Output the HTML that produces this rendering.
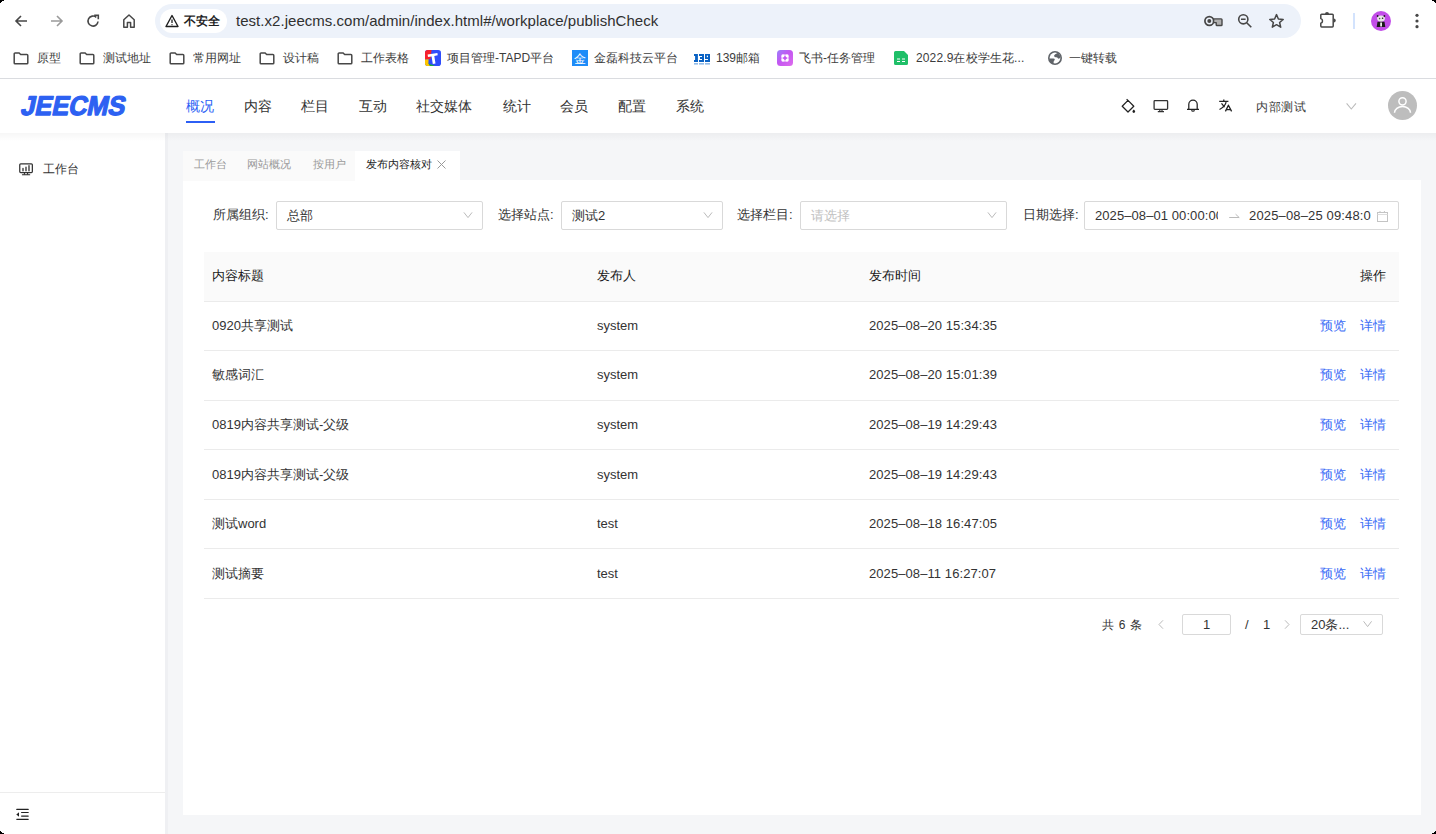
<!DOCTYPE html>
<html><head><meta charset="utf-8">
<style>
*{box-sizing:border-box;margin:0;padding:0}
html,body{width:1436px;height:834px;overflow:hidden;background:#fff;font-family:"Liberation Sans",sans-serif;color:#333}
.a{position:absolute;white-space:nowrap}
svg{position:absolute;overflow:visible}
#chrome{position:absolute;left:0;top:0;width:1436px;height:79px;background:#fff;border-bottom:1px solid #dadce0}
#url{position:absolute;left:155px;top:4px;width:1146px;height:34px;border-radius:17px;background:#edf2fa}
#pill{position:absolute;left:160px;top:9px;width:67px;height:24px;border-radius:12px;background:#fff}
.bm{position:absolute;top:50.5px;font-size:12px;color:#3c3c3c;white-space:nowrap;line-height:15px}
#header{position:absolute;left:0;top:79px;width:1436px;height:54px;background:#fff;z-index:2}
#hshadow{position:absolute;left:0;top:133px;width:1436px;height:8px;background:linear-gradient(rgba(0,0,0,.035),rgba(0,0,0,0));z-index:3}
#side{position:absolute;left:0;top:133px;width:165px;height:701px;background:#fff}
#content{position:absolute;left:165px;top:133px;width:1271px;height:701px;background:#f5f6f8;background-image:linear-gradient(90deg,#eff0f3 0,#eff0f3 3px,#f5f6f8 3px)}
#tabs{position:absolute;left:183px;top:151px;width:277px;height:30px;background:linear-gradient(90deg,#fafafa 0,#fafafa 172px,#fff 172px);z-index:1}
#card{position:absolute;left:183px;top:180px;width:1238px;height:635px;background:#fff}
.nav{position:absolute;top:19px;font-size:14px;line-height:17px;color:#333;white-space:nowrap}
.tab{position:absolute;top:6px;font-size:11px;line-height:14px;color:#999;white-space:nowrap}
.lbl{position:absolute;top:207px;font-size:13px;line-height:16px;color:#333}
.sel{position:absolute;top:201px;height:29px;border:1px solid #d9d9d9;border-radius:2px;background:#fff}
.th{position:absolute;top:88px;white-space:nowrap;font-size:13px;line-height:16px;color:#1a1a1a;font-weight:500}
.row{position:absolute;left:0;width:1238px;height:16px;font-size:13px;line-height:16px;color:#333}
.row span{position:absolute;top:0;white-space:nowrap}
.c1{left:29px}.c2{left:414px}.c3{left:686px;letter-spacing:0.08px}
.o1{left:1137px;color:#3b6cf6}.o2{left:1177px;color:#3b6cf6}
.rl{position:absolute;left:21px;width:1195px;height:1px;background:#ebebeb}
</style></head><body>
<div id="chrome">
  <div id="url"></div>
  <div id="pill"></div>
  <!-- nav icons -->
  <svg style="left:13px;top:13px" width="16" height="16" viewBox="0 0 16 16"><path d="M14 8H3M8 3L3 8l5 5" fill="none" stroke="#474747" stroke-width="1.6"/></svg>
  <svg style="left:49px;top:13px" width="16" height="16" viewBox="0 0 16 16"><path d="M2 8h11M8 3l5 5-5 5" fill="none" stroke="#9a9a9a" stroke-width="1.6"/></svg>
  <svg style="left:85px;top:13px" width="16" height="16" viewBox="0 0 16 16"><path d="M13 8.5A5 5 0 1 1 11.3 4.3" fill="none" stroke="#474747" stroke-width="1.6"/><path d="M9.2 2.2h4.1v4.1" fill="none" stroke="#474747" stroke-width="1.6"/></svg>
  <svg style="left:121px;top:13px" width="16" height="16" viewBox="0 0 16 16"><path d="M2.8 14.2V6.8L8 2l5.2 4.8v7.4H9.6V9.6H6.4v4.6z" fill="none" stroke="#474747" stroke-width="1.5" stroke-linejoin="round"/></svg>
  <!-- warning -->
  <svg style="left:165px;top:14px" width="14" height="14" viewBox="0 0 14 14"><path d="M7 1.5L13 12.5H1z" fill="none" stroke="#1f1f1f" stroke-width="1.4" stroke-linejoin="round"/><path d="M7 5.5v3.5M7 10.2v1" stroke="#1f1f1f" stroke-width="1.3"/></svg>
  <div class="a" style="left:184px;top:14px;font-size:12px;line-height:15px;color:#1f1f1f;font-weight:bold">不安全</div>
  <div class="a" style="left:236px;top:12px;font-size:15px;line-height:18px;color:#303030;letter-spacing:0.035px">test.x2.jeecms.com/admin/index.html#/workplace/publishCheck</div>
  <!-- right icons -->
  <svg style="left:1203px;top:15px" width="20" height="12" viewBox="0 0 20 12"><circle cx="6.3" cy="6" r="4.4" fill="none" stroke="#474747" stroke-width="1.7"/><circle cx="6.3" cy="6" r="2" fill="#474747"/><path d="M10.6 3.9h7.6q.8 0 .8.8v5q0 .8-.8.8h-4.2q-.8 0-.8-.8V7.6h-2.6z" fill="#b0b0b0" stroke="#474747" stroke-width="1.4" stroke-linejoin="round"/></svg>
  <svg style="left:1237px;top:13px" width="16" height="16" viewBox="0 0 16 16"><circle cx="6.3" cy="6.3" r="4.6" fill="none" stroke="#474747" stroke-width="1.6"/><path d="M4 6.3h4.6M9.7 9.7L14.3 14.3" stroke="#474747" stroke-width="1.6"/></svg>
  <svg style="left:1268px;top:13px" width="17" height="16" viewBox="0 0 17 16"><path d="M8.5 1.6l1.9 4.4 4.8.4-3.6 3.1 1.1 4.7-4.2-2.5-4.2 2.5 1.1-4.7L1.8 6.4l4.8-.4z" fill="none" stroke="#474747" stroke-width="1.5" stroke-linejoin="round"/></svg>
  <svg style="left:1319px;top:11px" width="18" height="18" viewBox="0 0 18 18"><path d="M1.8 4.1q0-.9.9-.9h10.6q.9 0 .9.9v11q0 .9-.9.9H2.7q-.9 0-.9-.9v-2.9a2.4 2.4 0 0 0 0-4.6z" fill="none" stroke="#474747" stroke-width="1.5" stroke-linejoin="round"/><path d="M6 3a2 2 0 0 1 4 0z" fill="#474747"/><path d="M14.8 7.6a1.9 1.9 0 0 1 0 3.8z" fill="#474747"/></svg>
  <div class="a" style="left:1353px;top:13px;width:2px;height:16px;background:#d3e3fd"></div>
  <svg style="left:1371px;top:11px" width="20" height="20" viewBox="0 0 20 20"><circle cx="10" cy="10" r="10" fill="#c24de9"/><ellipse cx="10" cy="7.6" rx="3.9" ry="3.1" fill="#e8e8e8"/><circle cx="6.6" cy="5" r="0.9" fill="#222"/><circle cx="13.4" cy="5" r="0.9" fill="#222"/><circle cx="8.6" cy="7.6" r="0.8" fill="#555"/><circle cx="11.6" cy="7.2" r="0.8" fill="#222"/><path d="M6.5 10.8h7l.8 5.2H5.7z" fill="#1a1a1a"/><path d="M9.2 11.5h1.8v4h-1.8z" fill="#eee"/></svg>
  <svg style="left:1415px;top:13px" width="4" height="16" viewBox="0 0 4 16"><circle cx="2" cy="2.3" r="1.6" fill="#474747"/><circle cx="2" cy="8" r="1.6" fill="#474747"/><circle cx="2" cy="13.7" r="1.6" fill="#474747"/></svg>
  <!-- bookmarks -->
  <svg style="left:13px;top:52px" width="16" height="12" viewBox="0 0 16 12"><path d="M1.2 1.9a.9.9 0 0 1 .9-.9h4l1.6 1.6h6.2a.9.9 0 0 1 .9.9v7.4a.9.9 0 0 1-.9.9H2.1a.9.9 0 0 1-.9-.9z" fill="none" stroke="#474747" stroke-width="1.5"/></svg>
  <div class="bm" style="left:37px">原型</div>
  <svg style="left:79px;top:52px" width="16" height="12" viewBox="0 0 16 12"><path d="M1.2 1.9a.9.9 0 0 1 .9-.9h4l1.6 1.6h6.2a.9.9 0 0 1 .9.9v7.4a.9.9 0 0 1-.9.9H2.1a.9.9 0 0 1-.9-.9z" fill="none" stroke="#474747" stroke-width="1.5"/></svg>
  <div class="bm" style="left:103px">测试地址</div>
  <svg style="left:169px;top:52px" width="16" height="12" viewBox="0 0 16 12"><path d="M1.2 1.9a.9.9 0 0 1 .9-.9h4l1.6 1.6h6.2a.9.9 0 0 1 .9.9v7.4a.9.9 0 0 1-.9.9H2.1a.9.9 0 0 1-.9-.9z" fill="none" stroke="#474747" stroke-width="1.5"/></svg>
  <div class="bm" style="left:193px">常用网址</div>
  <svg style="left:259px;top:52px" width="16" height="12" viewBox="0 0 16 12"><path d="M1.2 1.9a.9.9 0 0 1 .9-.9h4l1.6 1.6h6.2a.9.9 0 0 1 .9.9v7.4a.9.9 0 0 1-.9.9H2.1a.9.9 0 0 1-.9-.9z" fill="none" stroke="#474747" stroke-width="1.5"/></svg>
  <div class="bm" style="left:283px">设计稿</div>
  <svg style="left:337px;top:52px" width="16" height="12" viewBox="0 0 16 12"><path d="M1.2 1.9a.9.9 0 0 1 .9-.9h4l1.6 1.6h6.2a.9.9 0 0 1 .9.9v7.4a.9.9 0 0 1-.9.9H2.1a.9.9 0 0 1-.9-.9z" fill="none" stroke="#474747" stroke-width="1.5"/></svg>
  <div class="bm" style="left:361px">工作表格</div>
  <svg style="left:425px;top:50px" width="16" height="16" viewBox="0 0 16 16"><defs><clipPath id="tc"><rect width="16" height="16" rx="2.8"/></clipPath></defs><g clip-path="url(#tc)"><rect width="16" height="16" fill="#2f4dfb"/><path d="M0 0H6.6L5.4 9.2 0 9.6z" fill="#f7202c"/><path d="M0 9.6L3.6 9.3 3.4 13.6 5.2 16H0z" fill="#fdc500"/><path d="M5 16L3.4 13.6 8.6 15.2 9.8 16z" fill="#1faa3e"/><path d="M2.6 4.6L12.4 2.9 12.7 5.3 9.3 5.9 10.5 13.6 7.8 14.1 6.6 6.4 3 7z" fill="#fff"/></g></svg>
  <div class="bm" style="left:447px">项目管理-TAPD平台</div>
  <svg style="left:572px;top:50px" width="16" height="16" viewBox="0 0 16 16"><rect width="16" height="16" fill="#1e8cf8"/><text x="8" y="13" font-size="12" fill="#fff" text-anchor="middle">金</text></svg>
  <div class="bm" style="left:594px">金磊科技云平台</div>
  <svg style="left:694px;top:54px" width="16" height="12" viewBox="0 0 16 12"><g fill="#0a62c4"><path d="M0 0h3.9v6H4v2H0V6h1.1V2H0z"/><path d="M5 0h5v8H5V6h3V5H6V3h2V2H5z"/><path d="M11 0h5v8h-5V6h3V5h-3z"/></g><rect x="12.8" y="1.6" width="1.2" height="1.6" fill="#fff"/><g fill="#3a86d8" opacity=".55"><rect x="0" y="9" width="4" height="1.6"/><rect x="5" y="9" width="5" height="1.6"/><rect x="11" y="9" width="5" height="1.6"/></g></svg>
  <div class="bm" style="left:716px">139邮箱</div>
  <svg style="left:777px;top:50px" width="16" height="16" viewBox="0 0 16 16"><defs><linearGradient id="fs" x1="0" y1="0" x2="1" y2="1"><stop offset="0" stop-color="#9a80fb"/><stop offset=".45" stop-color="#c356f2"/><stop offset="1" stop-color="#de6cec"/></linearGradient></defs><rect width="16" height="16" rx="3.5" fill="url(#fs)"/><circle cx="8" cy="8" r="3" fill="none" stroke="#fff" stroke-opacity=".65" stroke-width="1.6"/><circle cx="5.9" cy="5.9" r="1.6" fill="#fff"/><circle cx="10.1" cy="5.9" r="1.6" fill="#fff"/><circle cx="5.9" cy="10.1" r="1.6" fill="#fff"/><circle cx="10.1" cy="10.1" r="1.6" fill="#fff"/><circle cx="8" cy="8" r="1.5" fill="#c356f2"/></svg>
  <div class="bm" style="left:799px">飞书-任务管理</div>
  <svg style="left:894px;top:51px" width="14" height="14" viewBox="0 0 14 14"><path d="M1.5 0H10l4 4v8.5a1.5 1.5 0 0 1-1.5 1.5h-11A1.5 1.5 0 0 1 0 12.5v-11A1.5 1.5 0 0 1 1.5 0z" fill="#1fbf68"/><path d="M3 8h3M8 8h3M3 10.5h3M8 10.5h3" stroke="#fff" stroke-width="1"/></svg>
  <div class="bm" style="left:916px;letter-spacing:0.12px">2022.9在校学生花...</div>
  <svg style="left:1048px;top:51px" width="14" height="14" viewBox="0 0 14 14"><circle cx="7" cy="7" r="7" fill="#5f6368"/><circle cx="7" cy="7" r="5.4" fill="#fff"/><path d="M6.2 4.3q1-1 2.3-1.8L9.8 2a5.5 5.5 0 0 1 2.6 4.6q-.9 1.6-2.3 1q-.9-1.5-2.1-1.3q-1.4.1-1.8-1z" fill="#5f6368"/><path d="M1.5 7.4h3.9q1.3 0 1.4 1.2q0 1-1 1.4l-.4 3a5.6 5.6 0 0 1-3.9-5.6z" fill="#5f6368"/></svg>
  <div class="bm" style="left:1069px">一键转载</div>
</div>
<div id="header">
  <svg style="left:19px;top:14px" width="112" height="28" viewBox="0 0 112 28"><text x="1" y="22" transform="skewX(-12)" transform-origin="0 22" font-family="Liberation Sans" font-weight="bold" font-size="27" fill="#2d61f2" stroke="#2d61f2" stroke-width="1.3" stroke-linejoin="round" textLength="104" lengthAdjust="spacingAndGlyphs">JEECMS</text></svg>
  <div class="nav" style="left:186px;color:#2c5ff5;font-weight:500">概况</div>
  <div class="a" style="left:186px;top:42px;width:29px;height:2px;background:#2c5ff5"></div>
  <div class="nav" style="left:244px">内容</div>
  <div class="nav" style="left:301px">栏目</div>
  <div class="nav" style="left:359px">互动</div>
  <div class="nav" style="left:416px">社交媒体</div>
  <div class="nav" style="left:503px">统计</div>
  <div class="nav" style="left:560px">会员</div>
  <div class="nav" style="left:618px">配置</div>
  <div class="nav" style="left:676px">系统</div>
  <!-- right icons -->
  <svg style="left:1121px;top:20px" width="15" height="15" viewBox="0 0 15 15"><path d="M5.6 0.2L7 1.4M1.2 7.2L7 1.4l5.8 5.8L7 13z" fill="none" stroke="#222" stroke-width="1.25" stroke-linejoin="round"/><path d="M12.8 10.6q1.3 1.2 1.3 2a1.3 1.3 0 0 1-2.6 0q0-.8 1.3-2z" fill="#222"/></svg>
  <svg style="left:1153px;top:20px" width="16" height="14" viewBox="0 0 16 14"><rect x="1.1" y="1.6" width="13.5" height="8.8" rx="0.8" fill="none" stroke="#333" stroke-width="1.3"/><path d="M6.8 10.5v1.6M9 10.5v1.6M4.8 12.6h6.2" stroke="#333" stroke-width="1.2"/></svg>
  <svg style="left:1186px;top:20px" width="15" height="15" viewBox="0 0 15 15"><path d="M2.8 10.4V5.3a4.2 4.2 0 0 1 8.4 0v5.1M1 10.4h12" fill="none" stroke="#222" stroke-width="1.25"/><path d="M5.7 10.9a1.3 1.3 0 0 0 2.6 0" fill="none" stroke="#222" stroke-width="1.1"/></svg>
  <svg style="left:1218px;top:20px" width="15" height="14" viewBox="0 0 15 14"><path d="M1.2 2.3H10.4M5.8 0.6V2.3M3.5 4.4L6.6 8.1M8.1 3.2Q7.2 7.6 1.5 10.5" fill="none" stroke="#222" stroke-width="1.3"/><path d="M7.4 12.4L10.4 6.2L13.6 12.4M8.5 10.6H12.4" fill="none" stroke="#222" stroke-width="1.3" stroke-linejoin="round"/></svg>
  <div class="a" style="left:1256px;top:19.5px;font-size:12px;line-height:16px;color:#3a3a3a;letter-spacing:0.5px">内部测试</div>
  <svg style="left:1346px;top:24px" width="11" height="7" viewBox="0 0 11 7"><path d="M0.6 0.4L5.3 6L10 0.4" fill="none" stroke="#bbb" stroke-width="1.1"/></svg>
  <svg style="left:1388px;top:12px" width="29" height="29" viewBox="0 0 29 29"><circle cx="14.5" cy="14.5" r="14.5" fill="#bdbdbd"/><circle cx="14.5" cy="10.3" r="3.6" fill="none" stroke="#fff" stroke-width="1.5"/><path d="M6.5 21.8a8 6.2 0 0 1 16 0" fill="none" stroke="#fff" stroke-width="1.5"/></svg>
</div>
<div id="hshadow"></div>
<div id="side">
  <svg style="left:19px;top:30px" width="15" height="13" viewBox="0 0 15 13"><rect x="0.75" y="0.75" width="12.6" height="8.8" rx="1" fill="none" stroke="#333" stroke-width="1.25"/><path d="M4 7.7V5.6M7 7.7V4.3M10 7.7V2.7" stroke="#555" stroke-width="1.6" stroke-linecap="round"/><path d="M5.4 9.6v1.9M8.6 9.6v1.9" stroke="#222" stroke-width="1"/><path d="M3.4 11.7h7.3" stroke="#222" stroke-width="1.1" stroke-linecap="round"/></svg>
  <div class="a" style="left:43px;top:29px;font-size:12px;line-height:15px;color:#333">工作台</div>
  <div class="a" style="left:0;top:659px;width:165px;height:1px;background:#ededed"></div>
  <svg style="left:16px;top:675px" width="14" height="13" viewBox="0 0 14 13"><path d="M0.8 1.4h11.4M5.6 4.5h6.6M5.6 8.1h6.6M0.8 11.3h11.4" stroke="#222" stroke-width="1.2" stroke-linecap="round"/><path d="M0.3 6.4L3 4.2v4.5z" fill="#222"/></svg>
</div>
<div id="content"></div>
<div id="tabs">
  <div class="tab" style="left:11px">工作台</div>
  <div class="tab" style="left:64px">网站概况</div>
  <div class="tab" style="left:130px">按用户</div>
  <div class="a" style="left:172px;top:0;width:105px;height:30px;background:#fff"></div>
  <div class="tab" style="left:183px;color:#222;font-weight:500">发布内容核对</div>
  <svg style="left:254px;top:9px" width="9" height="9" viewBox="0 0 9 9"><path d="M0.5 0.5l8 8M8.5 0.5l-8 8" stroke="#999" stroke-width="1"/></svg>
</div>
<div id="card">
  <div class="lbl" style="left:30px;top:27px">所属组织:</div>
  <div class="sel" style="left:93px;top:21px;width:207px"><div class="a" style="left:10px;top:6px;font-size:13px;line-height:16px;color:#333">总部</div>
    <svg style="left:186px;top:10px" width="11" height="7" viewBox="0 0 11 7"><path d="M0.9 0.4L5 5.6L9.1 0.4" fill="none" stroke="#bbb" stroke-width="1"/></svg></div>
  <div class="lbl" style="left:315px;top:27px">选择站点:</div>
  <div class="sel" style="left:378px;top:21px;width:162px"><div class="a" style="left:10px;top:6px;font-size:13px;line-height:16px;color:#333">测试2</div>
    <svg style="left:141px;top:10px" width="11" height="7" viewBox="0 0 11 7"><path d="M0.9 0.4L5 5.6L9.1 0.4" fill="none" stroke="#bbb" stroke-width="1"/></svg></div>
  <div class="lbl" style="left:554px;top:27px">选择栏目:</div>
  <div class="sel" style="left:617px;top:21px;width:207px"><div class="a" style="left:10px;top:6px;font-size:13px;line-height:16px;color:#bfbfbf">请选择</div>
    <svg style="left:186px;top:10px" width="11" height="7" viewBox="0 0 11 7"><path d="M0.9 0.4L5 5.6L9.1 0.4" fill="none" stroke="#bbb" stroke-width="1"/></svg></div>
  <div class="lbl" style="left:840px;top:27px">日期选择:</div>
  <div class="sel" style="left:901px;top:21px;width:315px;overflow:hidden">
    <div class="a" style="left:10px;top:6px;width:123px;overflow:hidden;font-size:13px;line-height:16px;color:#333;letter-spacing:0.08px">2025–08–01 00:00:00</div>
    <svg style="left:144px;top:11px" width="11" height="5" viewBox="0 0 11 5"><path d="M0.2 4.5h10L6.6 1.2" fill="none" stroke="#bbb" stroke-width="1"/></svg>
    <div class="a" style="left:164px;top:6px;width:124px;overflow:hidden;font-size:13px;line-height:16px;color:#333;letter-spacing:0.15px">2025–08–25 09:48:0</div>
    <svg style="left:292px;top:9px" width="12" height="11" viewBox="0 0 12 11"><rect x="0.5" y="1.5" width="10" height="9" fill="none" stroke="#c4c4c4" stroke-width="1"/><path d="M0.5 3.5h10" stroke="#ddd" stroke-width="1.2"/><path d="M3 0v2M7.4 0v2" stroke="#c4c4c4" stroke-width="1"/></svg>
  </div>
  <!-- table -->
  <div class="a" style="left:21px;top:72px;width:1195px;height:49px;background:#fafafa"></div>
  <div class="rl" style="top:121px"></div>
  <div class="rl" style="top:170px"></div>
  <div class="rl" style="top:220px"></div>
  <div class="rl" style="top:269px"></div>
  <div class="rl" style="top:319px"></div>
  <div class="rl" style="top:368px"></div>
  <div class="rl" style="top:418px"></div>
  <div class="th" style="left:29px">内容标题</div>
  <div class="th" style="left:414px">发布人</div>
  <div class="th" style="left:686px">发布时间</div>
  <div class="th" style="left:1177px">操作</div>
  <div class="row" style="top:138px"><span class="c1">0920共享测试</span><span class="c2">system</span><span class="c3">2025–08–20 15:34:35</span><span class="o1">预览</span><span class="o2">详情</span></div>
  <div class="row" style="top:187px"><span class="c1">敏感词汇</span><span class="c2">system</span><span class="c3">2025–08–20 15:01:39</span><span class="o1">预览</span><span class="o2">详情</span></div>
  <div class="row" style="top:237px"><span class="c1">0819内容共享测试-父级</span><span class="c2">system</span><span class="c3">2025–08–19 14:29:43</span><span class="o1">预览</span><span class="o2">详情</span></div>
  <div class="row" style="top:287px"><span class="c1">0819内容共享测试-父级</span><span class="c2">system</span><span class="c3">2025–08–19 14:29:43</span><span class="o1">预览</span><span class="o2">详情</span></div>
  <div class="row" style="top:336px"><span class="c1">测试word</span><span class="c2">test</span><span class="c3">2025–08–18 16:47:05</span><span class="o1">预览</span><span class="o2">详情</span></div>
  <div class="row" style="top:386px"><span class="c1">测试摘要</span><span class="c2">test</span><span class="c3">2025–08–11 16:27:07</span><span class="o1">预览</span><span class="o2">详情</span></div>
  <!-- pagination -->
  <div class="a" style="left:919px;top:438px;font-size:12px;line-height:15px;color:#333;word-spacing:1.5px">共 6 条</div>
  <svg style="left:975px;top:440px" width="6" height="9" viewBox="0 0 6 9"><path d="M5 0.3L1 4.5l4 4.2" fill="none" stroke="#bbb" stroke-width="1"/></svg>
  <div class="a" style="left:999px;top:434px;width:49px;height:21px;border:1px solid #d9d9d9;border-radius:2px"></div>
  <div class="a" style="left:1020px;top:437px;font-size:13px;line-height:16px;color:#333">1</div>
  <div class="a" style="left:1062px;top:437px;font-size:13px;line-height:16px;color:#333">/</div>
  <div class="a" style="left:1080px;top:437px;font-size:13px;line-height:16px;color:#333">1</div>
  <svg style="left:1101px;top:440px" width="6" height="9" viewBox="0 0 6 9"><path d="M1 0.3L5 4.5 1 8.7" fill="none" stroke="#bbb" stroke-width="1"/></svg>
  <div class="a" style="left:1117px;top:434px;width:83px;height:21px;border:1px solid #d9d9d9;border-radius:2px"></div>
  <div class="a" style="left:1128px;top:437px;font-size:13px;line-height:16px;color:#333">20条...</div>
  <svg style="left:1180px;top:441px" width="10" height="7" viewBox="0 0 10 7"><path d="M0.6 0.3L4.6 5.6L8.6 0.3" fill="none" stroke="#bbb" stroke-width="1"/></svg>
</div>
<div class="a" style="left:0;top:0;width:4px;height:1px;background:#000;z-index:9"></div><div class="a" style="left:0;top:1px;width:2px;height:1px;background:#000;z-index:9"></div><div class="a" style="left:0;top:2px;width:1px;height:1px;background:#000;z-index:9"></div>
<div class="a" style="left:1432px;top:0;width:4px;height:1px;background:#000;z-index:9"></div><div class="a" style="left:1434px;top:1px;width:2px;height:1px;background:#000;z-index:9"></div><div class="a" style="left:1435px;top:2px;width:1px;height:1px;background:#000;z-index:9"></div>
<div class="a" style="left:0;top:833px;width:4px;height:1px;background:#000;z-index:9"></div><div class="a" style="left:0;top:832px;width:2px;height:1px;background:#000;z-index:9"></div><div class="a" style="left:0;top:831px;width:1px;height:1px;background:#000;z-index:9"></div>
<div class="a" style="left:1432px;top:833px;width:4px;height:1px;background:#000;z-index:9"></div><div class="a" style="left:1434px;top:832px;width:2px;height:1px;background:#000;z-index:9"></div><div class="a" style="left:1435px;top:831px;width:1px;height:1px;background:#000;z-index:9"></div>
</body></html>
